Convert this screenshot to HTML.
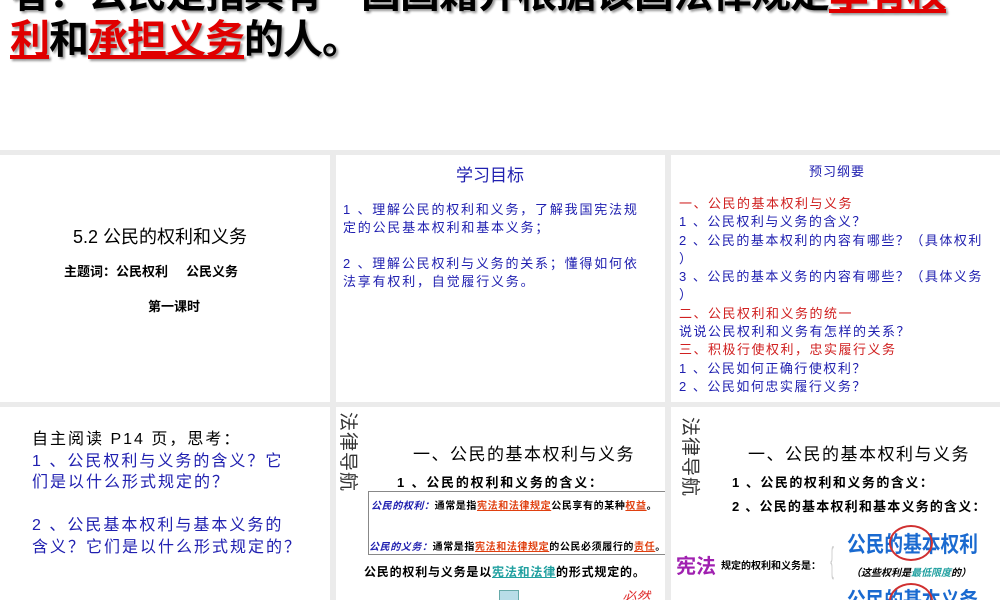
<!DOCTYPE html>
<html><head><meta charset="utf-8"><style>
body{margin:0;width:1000px;height:600px;overflow:hidden;background:#fff;font-family:"Liberation Sans","Noto Sans CJK SC",sans-serif;position:relative}
.top{position:absolute;left:10px;font-size:40px;font-weight:bold;line-height:48px;white-space:nowrap;text-shadow:2px 2px 2px #999;letter-spacing:-1px}
.r{color:#e00000;text-decoration:underline}
.grid{position:absolute;left:0;top:150px;width:1000px;height:450px;background:#ebebeb}
.t{position:absolute;background:#fff;overflow:hidden}
.a{position:absolute;white-space:nowrap}
.b{color:#2020b0}
.red{color:#d02020}
.v{writing-mode:vertical-rl;text-orientation:sideways;font-size:19px;color:#333;letter-spacing:1px}
</style></head><body>
<div class="top" style="top:-30px">者：公民是指具有一国国籍并根据该国法律规定<span class="r">享有权</span></div>
<div class="top" style="top:16px"><span class="r">利</span>和<span class="r">承担义务</span>的人。</div>
<div class="grid">
<div class="t" style="left:0;top:5px;width:330px;height:247px">
 <div class="a" style="left:73px;top:68px;font-size:18px">5.2 公民的权利和义务</div>
 <div class="a" style="left:64px;top:106px;font-size:13px;font-weight:bold">主题词：公民权利&nbsp;&nbsp;&nbsp;&nbsp;&nbsp;公民义务</div>
 <div class="a" style="left:148px;top:141px;font-size:13px;font-weight:bold">第一课时</div>
</div>
<div class="t" style="left:336px;top:5px;width:329px;height:247px">
 <div class="a b" style="left:120px;top:6px;font-size:17px">学习目标</div>
 <div class="a b" style="left:7px;top:46px;font-size:13px;line-height:18px;letter-spacing:1.8px">1 、理解公民的权利和义务，了解我国宪法规<br>定的公民基本权利和基本义务；<br><br>2 、理解公民权利与义务的关系；懂得如何依<br>法享有权利，自觉履行义务。</div>
</div>
<div class="t" style="left:671px;top:5px;width:329px;height:247px">
 <div class="a b" style="left:138px;top:6px;font-size:13px;letter-spacing:1px">预习纲要</div>
 <div class="a b" style="left:8px;top:40px;font-size:13px;line-height:18.3px;letter-spacing:1.5px"><span class="red">一、公民的基本权利与义务</span><br>1 、公民权利与义务的含义？<br>2 、公民的基本权利的内容有哪些？（具体权利<br>）<br>3 、公民的基本义务的内容有哪些？（具体义务<br>）<br><span class="red">二、公民权利和义务的统一</span><br>说说公民权利和义务有怎样的关系？<br><span class="red">三、积极行使权利，忠实履行义务</span><br>1 、公民如何正确行使权利？<br>2 、公民如何忠实履行义务？</div>
</div>
<div class="t" style="left:0;top:257px;width:330px;height:193px">
 <div class="a" style="left:32px;top:22px;font-size:16px;line-height:21.5px;letter-spacing:2px"><span>自主阅读 P14 页，思考：</span><br><span class="b">1 、公民权利与义务的含义？它<br>们是以什么形式规定的？<br><br>2 、公民基本权利与基本义务的<br>含义？它们是以什么形式规定的？</span></div>
</div>
<div class="t" style="left:336px;top:257px;width:329px;height:193px">
 <div class="a v" style="left:0px;top:5px">法律导航</div>
 <div class="a" style="left:77px;top:33px;font-size:17px;letter-spacing:1.5px">一、公民的基本权利与义务</div>
 <div class="a" style="left:61px;top:65px;font-size:13px;font-weight:bold;letter-spacing:1.8px">1 、公民的权利和义务的含义：</div>
 <div class="a" style="left:32px;top:84px;width:298px;height:62px;border:1px solid #888"></div>
 <div class="a" style="left:35px;top:90px;font-size:10px;font-weight:bold;letter-spacing:0.6px"><i class="b">公民的权利：</i>通常是指<span class="r" style="color:#e04010">宪法和法律规定</span>公民享有的某种<span class="r" style="color:#e04010">权益</span>。</div>
 <div class="a" style="left:33px;top:131px;font-size:10px;font-weight:bold;letter-spacing:0.6px"><i class="b">公民的义务：</i>通常是指<span class="r" style="color:#e04010">宪法和法律规定</span>的公民必须履行的<span class="r" style="color:#e04010">责任</span>。</div>
 <div class="a" style="left:28px;top:156px;font-size:12px;font-weight:bold;letter-spacing:0.8px">公民的权利与义务是以<span style="color:#20a0a0;text-decoration:underline">宪法和法律</span>的形式规定的。</div>
 <div class="a" style="left:163px;top:183px;width:18px;height:12px;background:#b8dde8;border:1px solid #6aa"></div>
 <div class="a" style="left:286px;top:180px;font-size:14px;color:#e03030;font-style:italic">必然</div>
</div>
<div class="t" style="left:671px;top:257px;width:329px;height:193px">
 <div class="a v" style="left:7px;top:10px">法律导航</div>
 <div class="a" style="left:77px;top:33px;font-size:17px;letter-spacing:1.5px">一、公民的基本权利与义务</div>
 <div class="a" style="left:61px;top:65px;font-size:13px;font-weight:bold;letter-spacing:1.5px">1 、公民的权利和义务的含义：</div>
 <div class="a" style="left:61px;top:89px;font-size:13px;font-weight:bold;letter-spacing:1.2px">2 、公民的基本权利和基本义务的含义：</div>
 <div class="a" style="left:5px;top:143px;font-size:20px;font-weight:bold;color:#a020b0">宪法</div>
 <div class="a" style="left:50px;top:150px;font-size:10px;font-weight:bold">规定的权利和义务是：</div>
 <div class="a" style="left:155px;top:132px;font-size:36px;color:#ccc;transform:scaleX(.3)">{</div>
 <div class="a" style="left:176px;top:120px;font-size:22px;font-weight:bold;color:#1a6ad0;transform:scaleX(.85);transform-origin:left">公民的基本权利</div>
 <div class="a" style="left:218px;top:118px;width:40px;height:32px;border:2px solid #d03030;border-radius:50%"></div>
 <div class="a" style="left:180px;top:157px;font-size:10px;font-weight:bold;font-style:italic">（这些权利是<span style="color:#20a0a0">最低限度</span>的）</div>
 <div class="a" style="left:176px;top:176px;font-size:22px;font-weight:bold;color:#1a6ad0;transform:scaleX(.85);transform-origin:left">公民的基本义务</div>
 <div class="a" style="left:218px;top:176px;width:40px;height:32px;border:2px solid #d03030;border-radius:50%"></div>
</div>
</div>
</body></html>
